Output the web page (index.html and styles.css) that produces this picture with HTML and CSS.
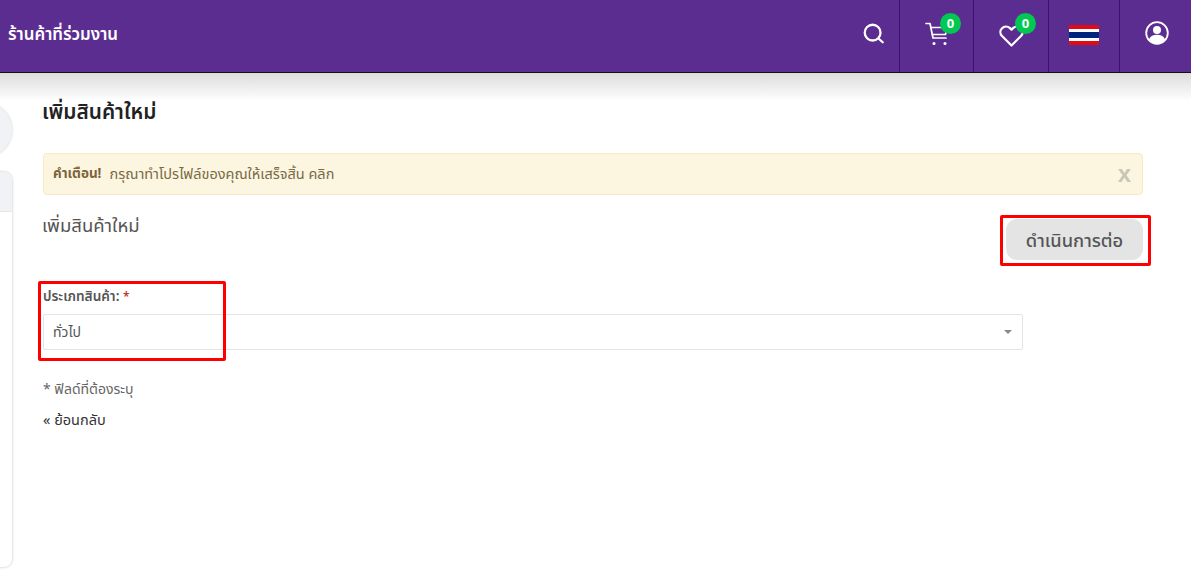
FILE: index.html
```html
<!DOCTYPE html>
<html lang="th">
<head>
<meta charset="utf-8">
<title>เพิ่มสินค้าใหม่</title>
<link rel="stylesheet" href="styles.css">
</head>
<body>
<header class="topbar">
  <a class="brand">ร้านค้าที่ร่วมงาน</a>
  <nav class="tools">
    <div class="tool tool-search">
      <svg class="icon" width="21" height="21" viewBox="0 0 24 24" fill="none" stroke="#fff" stroke-width="2.6" stroke-linecap="round"><circle cx="11" cy="11" r="9"/><path d="M18 18l4.500 4"/></svg>
    </div>
    <div class="tool tool-cart">
      <svg class="icon" width="24" height="24" viewBox="0 0 24 24" fill="none" stroke="#fff" stroke-width="1.7" stroke-linecap="round" stroke-linejoin="round"><path d="M1 1.500h4l3 14.500h13"/><path d="M6 5.500h16l-1.500 7H7.500"/><circle cx="9" cy="21.500" r="1.500" fill="#fff" stroke="none"/><circle cx="20" cy="21.500" r="1.500" fill="#fff" stroke="none"/></svg>
      <span class="badge">0</span>
    </div>
    <div class="tool tool-wish">
      <svg class="icon" width="25" height="23" viewBox="0 0 25 23" fill="none" stroke="#fff" stroke-width="2.200" stroke-linejoin="round"><path d="M12.500 21.500L2.800 11.800a5.600 5.600 0 0 1 7.900-7.900l1.800 1.800 1.800-1.800a5.600 5.600 0 0 1 7.900 7.900z"/></svg>
      <span class="badge">0</span>
    </div>
    <div class="tool tool-flag">
      <div class="flag"><i class="fl-red"></i><i class="fl-white"></i><i class="fl-blue"></i><i class="fl-white"></i><i class="fl-red"></i></div>
    </div>
    <div class="tool tool-user">
      <svg class="icon" width="24" height="24" viewBox="0 0 24 24"><circle cx="12" cy="12" r="10.800" fill="none" stroke="#fff" stroke-width="1.800"/><circle cx="12" cy="9" r="4" fill="#fff"/><path d="M3.800 18.500c1.500-3.500 4.500-4.800 8.200-4.800s6.700 1.300 8.200 4.800A10.800 10.800 0 0 1 12 23a10.800 10.800 0 0 1-8.200-4.500z" fill="#fff"/></svg>
    </div>
  </nav>
</header>
<div class="shade"></div>
<div class="page">
  <aside class="side">
    <div class="side-round"></div>
    <div class="side-card"><div class="side-card-head"></div></div>
  </aside>
  <main class="content">
    <h1 class="title">เพิ่มสินค้าใหม่</h1>
    <div class="alert">
      <strong>คำเตือน!</strong>
      <span class="alert-text">กรุณาทำโปรไฟล์ของคุณให้เสร็จสิ้น คลิก</span>
      <span class="alert-close">x</span>
    </div>
    <div class="form-head">
      <h2 class="subtitle">เพิ่มสินค้าใหม่</h2>
      <div class="mark mark-btn"><button class="btn" type="button">ดำเนินการต่อ</button></div>
    </div>
    <div class="field">
      <div class="mark mark-field"></div>
      <label class="label">ประเภทสินค้า: <span class="req">*</span></label>
      <div class="select"><span>ทั่วไป</span><i class="caret"></i></div>
    </div>
    <p class="note">* ฟิลด์ที่ต้องระบุ</p>
    <a class="back">« ย้อนกลับ</a>
  </main>
</div>
</body>
</html>
```
FILE: styles.css
```css
* { box-sizing: border-box; }
html, body { height: 100%; }
body {
  margin: 0;
  background: #fff;
  font-family: "Noto Sans", "Noto Sans Thai", "Liberation Sans", sans-serif;
  color: #555;
  overflow: hidden;
}
.topbar {
  height: 73px;
  background: #5c2d91;
  border-bottom: 1px solid #111;
  display: flex;
  justify-content: space-between;
  align-items: stretch;
}
.brand {
  color: #fff;
  font-size: 16.900px;
  font-weight: 600;
  align-self: center;
  padding-left: 8px;
  margin-top: -2px;
}
.tools { display: flex; }
.tool {
  position: relative;
  display: flex;
  align-items: center;
  justify-content: center;
  padding-bottom: 6px;
}
.tool + .tool { border-left: 1px solid #3b1170; }
.tool-search { width: 59px; padding-left: 7px; }
.tool-cart { width: 74px; padding-bottom: 5px; }
.tool-wish { width: 75px; padding-bottom: 1px; }
.tool-flag { width: 71px; padding-bottom: 2px; }
.tool-user { width: 72px; padding-left: 2px; padding-bottom: 7px; }
.badge {
  position: absolute;
  top: 13px;
  left: 40px;
  width: 21px;
  height: 21px;
  border-radius: 50%;
  background: #00c853;
  color: #fff;
  font-size: 13px;
  font-weight: 700;
  line-height: 20px;
  text-align: center;
}
.tool-wish .badge { left: 41px; }
.flag { width: 30px; height: 20px; display: flex; flex-direction: column; }
.flag i { display: block; }
.fl-red { height: 4px; background: #e30a17; }
.fl-white { height: 3px; background: #fff; }
.fl-blue { height: 6px; background: #00247d; }
.shade {
  height: 28px;
  background: linear-gradient(#dcdcdc, #fff);
}
.page {
  display: flex;
  margin-top: -28px;
}
.side {
  width: 12px;
  flex: none;
  padding-top: 30px;
  display: flex;
  flex-direction: column;
  align-items: flex-end;
}
.side-round {
  width: 54px;
  height: 54px;
  flex: none;
  border-radius: 50%;
  background: #f1f2f6;
  box-shadow: 0 0 3px rgba(0,0,0,.2);
}
.side-card {
  width: 100px;
  height: 395px;
  flex: none;
  margin-top: 15px;
  background: #fff;
  border-radius: 8px;
  overflow: hidden;
  box-shadow: 0 0 3px rgba(0,0,0,.25);
}
.side-card-head { height: 40px; background: #f1f2f6; border-bottom: 1px solid #e6e6e6; }
.content {
  width: 1100px;
  margin-left: 31px;
  position: relative;
}
.title {
  margin: 0 0 0 -1px;
  padding-top: 23px;
  font-size: 20.800px;
  font-weight: 600;
  line-height: 30px;
  color: #222;
}
.alert {
  margin-top: 27px;
  height: 42px;
  background: #fcf6e1;
  border: 1px solid #f8e9c4;
  border-radius: 4px;
  display: flex;
  align-items: center;
  padding: 0 10px 0 9px;
  font-size: 14.500px;
  color: #7a6a45;
  gap: 8px;
}
.alert strong { font-size: 13.500px; font-weight: 700; color: #7d6339; }
.alert-close {
  margin-left: auto;
  font-family: "Liberation Sans", sans-serif;
  font-size: 24px;
  font-weight: 700;
  color: #c9c6b5;
  line-height: 1;
  padding-right: 1px;
}
.form-head {
  display: flex;
  justify-content: space-between;
  margin-top: 18px;
}
.subtitle {
  margin: 0 0 0 -1px;
  font-size: 18.500px;
  font-weight: 400;
  line-height: 24px;
  color: #555;
}
.mark { border: 3px solid #f00; border-radius: 2px; }
.mark-btn {
  position: absolute;
  top: 142px;
  left: 957px;
  width: 151px;
  height: 51px;
  padding: 1px 3px 0;
}
.btn {
  display: block;
  width: 137px;
  height: 41px;
  border: 0;
  border-radius: 11px;
  background: #e4e4e4;
  color: #555;
  font: 500 18.300px/41px "Noto Sans", "Noto Sans Thai", sans-serif;
  padding: 0;
}
.field { position: relative; margin-top: 49px; width: 980px; }
.mark-field {
  position: absolute;
  top: -5px;
  left: -5px;
  width: 188px;
  height: 80px;
}
.label {
  display: block;
  font-size: 13.600px;
  font-weight: 600;
  line-height: 20px;
  color: #555;
}
.req { color: #c33; font-size: 12px; }
.select {
  margin-top: 7px;
  height: 36px;
  border: 1px solid #e4e4e4;
  border-radius: 2px;
  display: flex;
  align-items: center;
  justify-content: space-between;
  padding: 0 10px 0 9px;
  font-size: 14px;
  color: #555;
}
.caret {
  width: 0;
  height: 0;
  border-left: 4px solid transparent;
  border-right: 4px solid transparent;
  border-top: 4px solid #888;
}
.note {
  margin: 29px 0 0;
  font-size: 14px;
  line-height: 20px;
  color: #666;
}
.back {
  display: block;
  margin-top: 10px;
  font-size: 14.500px;
  line-height: 20px;
  color: #333;
}
```
